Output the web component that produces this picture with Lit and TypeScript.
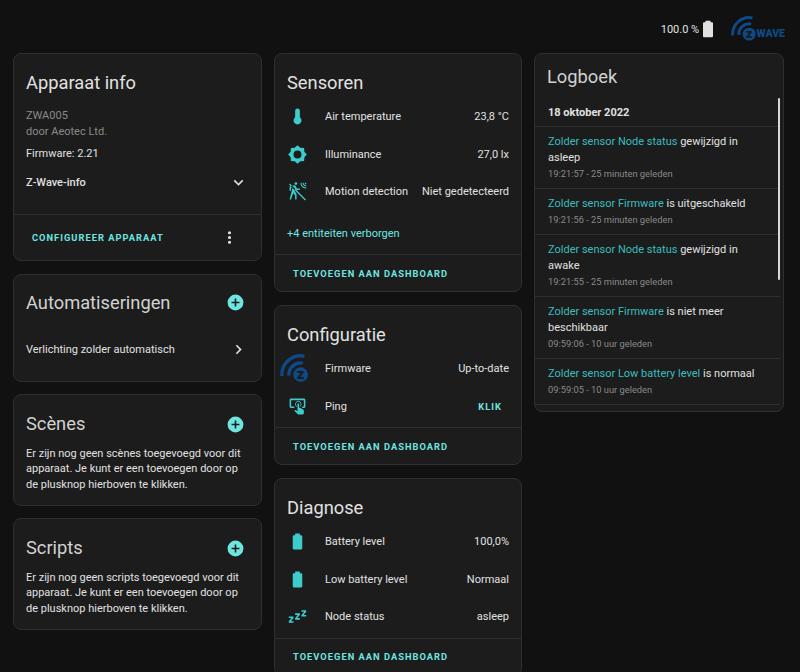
import { LitElement, html, css, svg } from 'lit';
import { customElement } from 'lit/decorators.js';

// sun outline: 16 points going round, every other one a small tip
const sunOutline = Array.from({ length: 16 }, (_, i) => {
  const a = (i * Math.PI) / 8;
  const r = i % 2 ? 9.4 : 11.8;
  return `${(12 + r * Math.sin(a)).toFixed(2)},${(12 - r * Math.cos(a)).toFixed(2)}`;
}).join('L');

const P = {
  thermo: 'M15 13V5A3 3 0 0 0 9 5V13A5 5 0 1 0 15 13Z',
  sun: `M${sunOutline}ZM12,7A5,5 0 0,0 7,12A5,5 0 0,0 12,17A5,5 0 0,0 17,12A5,5 0 0,0 12,7Z`,
  motion:
    'M10,0.2C9,0.2 8.2,1 8.2,2C8.2,3 9,3.8 10,3.8C11,3.8 11.8,3 11.8,2C11.8,1 11,0.2 10,0.2M15.67,1A7.33,7.33 0 0,0 23,8.33V7A6,6 0 0,1 17,1H15.67M18.33,1C18.33,3.58 20.42,5.67 23,5.67V4.33C21.16,4.33 19.67,2.84 19.67,1H18.33M21,1A2,2 0 0,0 23,3V1H21M7.92,4.03C7.75,4.03 7.58,4.06 7.42,4.11L2,5.8V11H3.8V7.33L5.91,6.67L2,22H3.8L6.67,13.89L9,17V22H10.8V15.59L8.31,11.05L9.04,8.18L10.12,10H15V8.2H11.38L9.38,4.87C9.08,4.37 8.54,4.03 7.92,4.03ZM1.3,3.2L2.5,2L22.7,22.2L21.5,23.4Z',
  tap: 'M13 5C15.21 5 17 6.79 17 9C17 10.5 16.2 11.77 15 12.46V11.24C15.61 10.69 16 9.89 16 9C16 7.34 14.66 6 13 6S10 7.34 10 9C10 9.89 10.39 10.69 11 11.24V12.46C9.8 11.77 9 10.5 9 9C9 6.79 10.79 5 13 5M20 20.5C19.97 21.32 19.32 21.97 18.5 22H13C12.62 22 12.26 21.85 12 21.57L8 17.37L8.74 16.6C8.93 16.39 9.2 16.28 9.5 16.28H9.7L12 18V9C12 8.45 12.45 8 13 8S14 8.45 14 9V13.47L15.21 13.6L19.15 15.79C19.68 16.03 20 16.56 20 17.14V20.5M20 2H4C2.9 2 2 2.9 2 4V12C2 13.11 2.9 14 4 14H8V12L4 12L4 4H20L20 12H18V14H20V13.96L20.04 14C21.13 14 22 13.09 22 12V4C22 2.9 21.11 2 20 2Z',
  battery:
    'M16.67,4H15V2H9V4H7.33A1.33,1.33 0 0,0 6,5.33V20.67C6,21.4 6.6,22 7.33,22H16.67A1.33,1.33 0 0,0 18,20.67V5.33C18,4.6 17.4,4 16.67,4Z',
  sleep:
    'M23,12H17V10L20.39,6H17V4H23V6L19.62,10H23V12M15,16H9V14L12.39,10H9V8H15V10L11.62,14H15V16M7,20H1V18L4.39,14H1V12H7V14L3.62,18H7V20Z',
  down: 'M7.41,8.58L12,13.17L16.59,8.58L18,10L12,16L6,10L7.41,8.58Z',
  right: 'M8.59,16.58L13.17,12L8.59,7.41L10,6L16,12L10,18L8.59,16.58Z',
  dots: 'M12,16A2,2 0 0,1 14,18A2,2 0 0,1 12,20A2,2 0 0,1 10,18A2,2 0 0,1 12,16M12,10A2,2 0 0,1 14,12A2,2 0 0,1 12,14A2,2 0 0,1 10,12A2,2 0 0,1 12,10M12,4A2,2 0 0,1 14,6A2,2 0 0,1 12,8A2,2 0 0,1 10,6A2,2 0 0,1 12,4Z',
  plus: 'M17,13H13V17H11V13H7V11H11V7H13V11H17M12,2A10,10 0 0,0 2,12A10,10 0 0,0 12,22A10,10 0 0,0 22,12A10,10 0 0,0 12,2Z',
};

const icon = (d: string, cls = '') =>
  html`<svg class="icon ${cls}" viewBox="0 0 24 24"><path d=${d}></path></svg>`;

// z-wave mark, drawn around the disc at 0,0
const zmark = (cls: string) => html`<svg class=${cls} viewBox="-22 -22 32 32">
  ${svg`
    <path d="M-20 1.5A20 20 0 0 1 4 -19.6" fill="none" stroke="#0d4a87" stroke-width="3.6"></path>
    <path d="M-12.5 1A12.5 12.5 0 0 1 2.5 -12.2" fill="none" stroke="#0d4a87" stroke-width="3.6"></path>
    <circle r="7.8" fill="#0d4a87"></circle>
    <text y="5" text-anchor="middle" font-size="16" font-weight="900" font-family="Roboto, sans-serif" fill="#1c1c1c">z</text>
  `}
</svg>`;

const logEntries = [
  ['Zolder sensor Node status', ' gewijzigd in asleep', '19:21:57 - 25 minuten geleden'],
  ['Zolder sensor Firmware', ' is uitgeschakeld', '19:21:56 - 25 minuten geleden'],
  ['Zolder sensor Node status', ' gewijzigd in awake', '19:21:55 - 25 minuten geleden'],
  ['Zolder sensor Firmware', ' is niet meer beschikbaar', '09:59:06 - 10 uur geleden'],
  ['Zolder sensor Low battery level', ' is normaal', '09:59:05 - 10 uur geleden'],
];

@customElement('app-root')
export class AppRoot extends LitElement {
  static styles = css`
    :host {
      display: block;
      height: 672px;
      overflow: hidden;
      background: #111111;
      color: #e1e1e1;
      font-family: Roboto, sans-serif;
      font-size: 11px;
    }
    .top {
      height: 53px;
      box-sizing: border-box;
      display: flex;
      justify-content: flex-end;
      align-items: center;
      padding: 16px 15px 10.6px 0;
    }
    .top .batt {
      width: 20px;
      height: 20px;
      fill: #e1e1e1;
      margin: 0 13px 0 -1px;
      flex: none;
    }
    .zlogo {
      display: flex;
      align-items: flex-end;
    }
    .mark-top {
      width: 26.4px;
      height: 26.4px;
      overflow: visible;
      flex: none;
    }
    .wave {
      font-size: 10.5px;
      line-height: 12px;
      font-weight: 900;
      color: #0d4a87;
      margin: 0 0 2px -1px;
    }
    .cols {
      display: grid;
      grid-template-columns: 249px 248px 250px;
      gap: 12px;
      padding: 0 16px 0 13px;
      align-items: start;
    }
    .col {
      display: flex;
      flex-direction: column;
      gap: 12.5px;
    }
    .col.mid {
      gap: 13px;
    }
    .card {
      background: #1c1c1c;
      border: 1px solid #2f2f2f;
      border-radius: 8px;
      box-sizing: border-box;
    }
    .icon {
      width: 19px;
      height: 19px;
      fill: currentColor;
      display: block;
      flex: none;
    }
    h2 {
      margin: 0;
      font-size: 18.3px;
      font-weight: 400;
      line-height: 28px;
      color: #e1e1e1;
    }
    h2.dim {
      color: #d2d2d2;
    }
    .head {
      display: flex;
      justify-content: space-between;
      align-items: center;
      padding: 15px 15.8px 0 12px;
    }
    .plus {
      color: #6fe5e0;
    }
    .info {
      height: 208px;
    }
    .info .model {
      padding: 11px 12px 0;
      color: #8a8a8a;
      line-height: 16px;
    }
    .info .fwline {
      padding: 6px 12px 0;
      line-height: 16px;
    }
    .info .zw {
      display: flex;
      justify-content: space-between;
      align-items: center;
      padding: 0 13px 0 12px;
      margin-top: 11px;
      font-weight: 500;
    }
    .footer {
      border-top: 1px solid #2f2f2f;
      display: flex;
      justify-content: space-between;
      align-items: center;
      padding: 0 20px 0 18px;
      color: #6fe5e0;
      font-size: 9.3px;
      font-weight: 700;
      letter-spacing: 1.02px;
      text-transform: uppercase;
      height: 36px;
    }
    .info .footer {
      height: 44px;
      margin-top: 22px;
      padding-right: 22.5px;
    }
    .info .footer .icon {
      color: #e1e1e1;
    }
    .auto {
      height: 108px;
    }
    .auto .head {
      padding-top: 14px;
    }
    .auto .row {
      display: flex;
      justify-content: space-between;
      align-items: center;
      padding: 23px 13px 0 12px;
    }
    .text-card {
      height: 111.5px;
    }
    .text-card .head {
      padding-top: 15px;
    }
    .text-card p {
      margin: 0;
      padding: 7.5px 12px 0;
      line-height: 15.5px;
    }
    .entities .head {
      padding-right: 12px;
    }
    .ent {
      display: flex;
      align-items: center;
      height: 37.5px;
      padding: 0 12px 0 7px;
    }
    .ent .ico {
      width: 30px;
      display: flex;
      justify-content: center;
      color: #3ecbcb;
      margin-right: 13px;
    }
    .ent .name {
      flex: 1;
    }
    .ent .klik {
      color: #6fe5e0;
      font-size: 9.3px;
      font-weight: 700;
      letter-spacing: 1.02px;
      padding-right: 7px;
    }
    .list {
      padding: 1px 0 2px;
    }
    .more {
      color: #6fe5e0;
      padding: 13px 12px 12.5px;
      line-height: 16px;
    }
    .fw {
      width: 19px;
      height: 19px;
      position: relative;
    }
    .mark-fw {
      position: absolute;
      left: -7.1px;
      top: -5.1px;
      width: 30px;
      height: 30px;
      overflow: visible;
    }
    .log {
      height: 359px;
      position: relative;
    }
    .log .head {
      padding: 9px 12px 0;
    }
    .log .scroll {
      height: 307px;
      overflow: hidden;
      margin: 14px 3px 0 0;
    }
    .log .date {
      font-weight: 700;
      line-height: 16px;
      padding: 0 13px 5px;
    }
    .log .entry {
      border-top: 1px solid #2f2f2f;
      padding: 7.2px 21px 5.8px 13px;
      line-height: 16px;
    }
    .log .entry a {
      color: #3bbcbc;
    }
    .log .entry small {
      display: block;
      font-size: 9.3px;
      color: #8a8a8a;
      line-height: 16px;
    }
    .bar {
      position: absolute;
      right: 3px;
      top: 44px;
      width: 2px;
      height: 182px;
      background: #d8d8d8;
      border-radius: 1px;
    }
  `;

  private entity(ic: unknown, name: string, value: unknown) {
    return html`<div class="ent">
      <div class="ico">${ic}</div>
      <div class="name">${name}</div>
      <div>${value}</div>
    </div>`;
  }

  render() {
    return html`
      <div class="top">
        <span>100.0 %</span>
        <svg class="batt" viewBox="0 0 24 24"><path d=${P.battery}></path></svg>
        <div class="zlogo">${zmark('mark-top')}<span class="wave">WAVE</span></div>
      </div>
      <div class="cols">
        <div class="col">
          <div class="card info">
            <div class="head"><h2>Apparaat info</h2></div>
            <div class="model">ZWA005<br />door Aeotec Ltd.</div>
            <div class="fwline">Firmware: 2.21</div>
            <div class="zw"><span>Z-Wave-info</span>${icon(P.down)}</div>
            <div class="footer">
              <span>Configureer apparaat</span>${icon(P.dots)}
            </div>
          </div>
          <div class="card auto">
            <div class="head"><h2 class="dim">Automatiseringen</h2>${icon(P.plus, 'plus')}</div>
            <div class="row"><span>Verlichting zolder automatisch</span>${icon(P.right)}</div>
          </div>
          <div class="card text-card">
            <div class="head"><h2 class="dim">Scènes</h2>${icon(P.plus, 'plus')}</div>
            <p>
              Er zijn nog geen scènes toegevoegd voor dit apparaat. Je kunt er een toevoegen door op
              de plusknop hierboven te klikken.
            </p>
          </div>
          <div class="card text-card">
            <div class="head"><h2 class="dim">Scripts</h2>${icon(P.plus, 'plus')}</div>
            <p>
              Er zijn nog geen scripts toegevoegd voor dit apparaat. Je kunt er een toevoegen door
              op de plusknop hierboven te klikken.
            </p>
          </div>
        </div>
        <div class="col mid">
          <div class="card entities">
            <div class="head"><h2>Sensoren</h2></div>
            <div class="list">
              ${this.entity(icon(P.thermo), 'Air temperature', '23,8 °C')}
              ${this.entity(icon(P.sun), 'Illuminance', '27,0 lx')}
              ${this.entity(icon(P.motion), 'Motion detection', 'Niet gedetecteerd')}
            </div>
            <div class="more">+4 entiteiten verborgen</div>
            <div class="footer"><span>Toevoegen aan dashboard</span></div>
          </div>
          <div class="card entities">
            <div class="head"><h2>Configuratie</h2></div>
            <div class="list">
              ${this.entity(html`<div class="fw">${zmark('mark-fw')}</div>`, 'Firmware', 'Up-to-date')}
              ${this.entity(icon(P.tap), 'Ping', html`<span class="klik">KLIK</span>`)}
            </div>
            <div class="footer"><span>Toevoegen aan dashboard</span></div>
          </div>
          <div class="card entities">
            <div class="head"><h2>Diagnose</h2></div>
            <div class="list">
              ${this.entity(icon(P.battery), 'Battery level', '100,0%')}
              ${this.entity(icon(P.battery), 'Low battery level', 'Normaal')}
              ${this.entity(icon(P.sleep), 'Node status', 'asleep')}
            </div>
            <div class="footer"><span>Toevoegen aan dashboard</span></div>
          </div>
        </div>
        <div class="col">
          <div class="card log">
            <div class="head"><h2 class="dim">Logboek</h2></div>
            <div class="scroll">
              <div class="date">18 oktober 2022</div>
              ${logEntries.map(
                ([who, what, when]) => html`<div class="entry">
                  <a>${who}</a>${what}<small>${when}</small>
                </div>`,
              )}
              <div class="entry"></div>
            </div>
            <div class="bar"></div>
          </div>
        </div>
      </div>
    `;
  }
}
